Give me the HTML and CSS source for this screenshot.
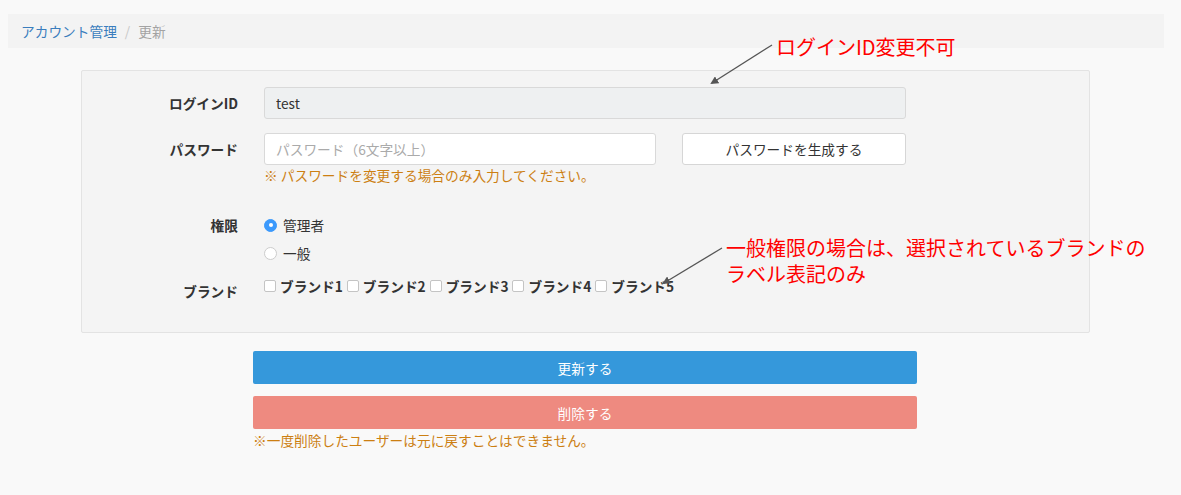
FILE: index.html
```html
<!DOCTYPE html>
<html lang="ja">
<head>
<meta charset="utf-8">
<title>アカウント管理 - 更新</title>
<link rel="stylesheet" href="styles.css">
</head>
<body>
<div class="page">
  <nav class="breadcrumb">
    <a class="crumb-link" href="#">アカウント管理</a>
    <span class="crumb-sep">/</span>
    <span class="crumb-current">更新</span>
  </nav>

  <div class="main">
    <form class="panel">
      <div class="row">
        <label class="label">ログインID</label>
        <div class="field">
          <input class="input input-readonly" type="text" value="test" readonly>
        </div>
      </div>

      <div class="row row-pw">
        <label class="label">パスワード</label>
        <div class="field">
          <div class="pw-line">
            <input class="input input-pw" type="password" placeholder="パスワード（6文字以上）">
            <button type="button" class="btn-gen">パスワードを生成する</button>
          </div>
          <p class="help">※ パスワードを変更する場合のみ入力してください。</p>
        </div>
      </div>

      <div class="row row-role">
        <label class="label label-role">権限</label>
        <div class="field radios">
          <label class="radio"><span class="radio-dot checked"></span>管理者</label>
          <label class="radio"><span class="radio-dot"></span>一般</label>
        </div>
      </div>

      <div class="row row-brand">
        <label class="label label-brand">ブランド</label>
        <div class="field brands">
          <label class="check"><span class="box"></span>ブランド1</label>
          <label class="check"><span class="box"></span>ブランド2</label>
          <label class="check"><span class="box"></span>ブランド3</label>
          <label class="check"><span class="box"></span>ブランド4</label>
          <label class="check"><span class="box"></span>ブランド5</label>
        </div>
      </div>
    </form>

    <div class="actions">
      <button type="button" class="btn btn-update">更新する</button>
      <button type="button" class="btn btn-delete">削除する</button>
      <p class="help help-del">※一度削除したユーザーは元に戻すことはできません。</p>
    </div>
  </div>

  <div class="note note-id">ログインID変更不可</div>
  <div class="note note-brand">
    <div class="note-line">一般権限の場合は、選択されているブランドの</div>
    <div class="note-line">ラベル表記のみ</div>
  </div>
  <svg class="arrows" width="1181" height="495" viewBox="0 0 1181 495">
    <defs>
      <marker id="ah" markerWidth="8" markerHeight="8" refX="6" refY="4" orient="auto" markerUnits="userSpaceOnUse">
        <path d="M0,0 L8,4 L0,8 Z" fill="#555"/>
      </marker>
    </defs>
    <line x1="772" y1="45" x2="712" y2="83" stroke="#555" stroke-width="1.3" marker-end="url(#ah)"/>
    <line x1="722" y1="248" x2="664" y2="283" stroke="#555" stroke-width="1.3" marker-end="url(#ah)"/>
  </svg>
</div>
</body>
</html>
```

FILE: styles.css
```css
* { box-sizing: border-box; }

html, body {
  margin: 0;
  padding: 0;
  background: #f9f9f9;
}

body {
  font-family: "Noto Sans CJK JP", "Noto Sans", sans-serif;
  font-size: 13.7px;
  color: #333;
}

.page {
  position: relative;
  width: 1181px;
  height: 495px;
  padding-top: 14px;
  overflow: hidden;
}

.breadcrumb {
  margin-left: 8px;
  width: 1156px;
  height: 34px;
  background: #f3f3f3;
  display: flex;
  align-items: center;
  padding-left: 13px;
  padding-bottom: 1px;
  font-size: 13.7px;
}

.crumb-link {
  color: #3a7dbd;
  text-decoration: none;
}

.crumb-sep {
  color: #c8c8c8;
  margin: 0 8px;
}

.crumb-current {
  color: #a3a3a3;
}

.main {
  margin-top: 22px;
}

.panel {
  margin: 0 0 0 81px;
  width: 1009px;
  height: 263px;
  background: #f4f4f4;
  border: 1px solid #e3e3e3;
  border-radius: 2px;
  padding-top: 16px;
}

.row {
  display: flex;
  align-items: flex-start;
}

.label {
  width: 156px;
  flex: none;
  text-align: right;
  font-weight: bold;
  line-height: 32px;
  margin-right: 26px;
  color: #333;
}

.field {
  flex: none;
  width: 642px;
}

.input {
  display: block;
  height: 32px;
  border: 1px solid #d9d9d9;
  border-radius: 3px;
  padding: 0 11px;
  font-family: inherit;
  font-size: 13.7px;
  color: #333;
  outline: none;
}

.input-readonly {
  width: 642px;
  background: #eef0f1;
}

.row-pw {
  margin-top: 14px;
}

.pw-line {
  display: flex;
  gap: 26px;
}

.input-pw {
  width: 392px;
  background: #fff;
}

.input-pw::placeholder {
  color: #aaa;
}

.btn-gen {
  width: 224px;
  height: 32px;
  background: #fff;
  border: 1px solid #d6d6d6;
  border-radius: 3px;
  font-family: inherit;
  font-size: 13.7px;
  color: #333;
}

.help {
  margin: 0;
  color: #cc7f12;
  font-size: 13.7px;
  line-height: 20px;
}

.row-role {
  margin-top: 30px;
}

.label-role {
  line-height: 20px;
}

.radios {
  display: flex;
  flex-direction: column;
  gap: 8px;
}

.radio {
  display: flex;
  align-items: center;
  height: 20px;
  color: #333;
}

.radio-dot {
  width: 13px;
  height: 13px;
  border-radius: 50%;
  border: 1px solid #ccc;
  background: #fff;
  margin-right: 6px;
  position: relative;
}

.radio-dot.checked {
  background: #3b99fc;
  border-color: #3b99fc;
}

.radio-dot.checked::after {
  content: "";
  position: absolute;
  left: 3.5px;
  top: 3.5px;
  width: 4px;
  height: 4px;
  border-radius: 50%;
  background: #fff;
}

.row-brand {
  margin-top: 13px;
}

.label-brand {
  line-height: 20px;
  padding-top: 5px;
}

.brands {
  display: flex;
  align-items: center;
  height: 20px;
  gap: 4px;
}

.check {
  display: flex;
  align-items: center;
  font-weight: bold;
  color: #333;
}

.box {
  width: 12px;
  height: 12px;
  border: 1px solid #c4c4c4;
  border-radius: 2px;
  background: #fff;
  margin-right: 4px;
}

.actions {
  margin: 18px 0 0 253px;
  width: 664px;
}

.btn {
  display: block;
  width: 664px;
  height: 33px;
  border: none;
  border-radius: 2px;
  color: #fff;
  font-family: inherit;
  font-size: 13.7px;
}

.btn-update {
  background: #3598db;
}

.btn-delete {
  background: #ee8a80;
  margin-top: 12px;
}

.help-del {
  margin-top: 1px;
}

.note {
  position: absolute;
  color: #ff0000;
  font-size: 20px;
  line-height: 26px;
}

.note-line {
  height: 26px;
  white-space: nowrap;
}

.note-id {
  left: 776px;
  top: 34px;
}

.note-brand {
  left: 726px;
  top: 235px;
}

.arrows {
  position: absolute;
  left: 0;
  top: 0;
  pointer-events: none;
}
```
